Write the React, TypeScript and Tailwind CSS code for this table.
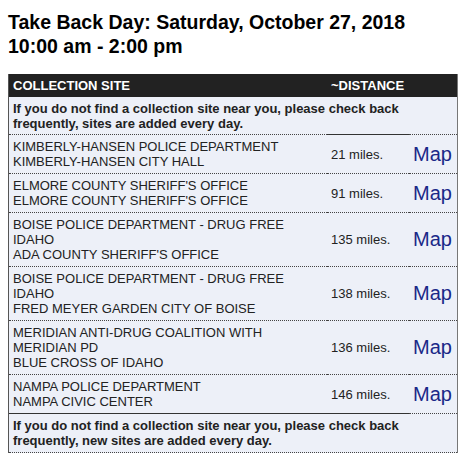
const sites = [
  { lines: ['KIMBERLY-HANSEN POLICE DEPARTMENT', 'KIMBERLY-HANSEN CITY HALL'], miles: 21 },
  { lines: ['ELMORE COUNTY SHERIFF\'S OFFICE', 'ELMORE COUNTY SHERIFF\'S OFFICE'], miles: 91 },
  { lines: ['BOISE POLICE DEPARTMENT - DRUG FREE', 'IDAHO', 'ADA COUNTY SHERIFF\'S OFFICE'], miles: 135 },
  { lines: ['BOISE POLICE DEPARTMENT - DRUG FREE', 'IDAHO', 'FRED MEYER GARDEN CITY OF BOISE'], miles: 138 },
  { lines: ['MERIDIAN ANTI-DRUG COALITION WITH', 'MERIDIAN PD', 'BLUE CROSS OF IDAHO'], miles: 136 },
  { lines: ['NAMPA POLICE DEPARTMENT', 'NAMPA CIVIC CENTER'], miles: 146 },
];

export default function App() {
  return (
    <div className="min-h-screen bg-white px-2 pt-[10px] text-[#222]" style={{ fontFamily: '"Liberation Sans", Arial, sans-serif' }}>
      <h1 className="text-[19.5px] font-bold leading-[24px] text-black">
        Take Back Day: Saturday, October 27, 2018
        <br />
        10:00 am - 2:00 pm
      </h1>

      <div className="mt-4 w-[450px] border-l border-r border-l-[#555] border-r-[#777] border-r-dotted bg-[#edf0f8] text-[13px] leading-[15px]">
        {/* header */}
        <div className="flex bg-[#222] font-bold text-white">
          <div className="w-[318px] px-1 py-1">COLLECTION SITE</div>
          <div className="flex-1 px-1 py-1">~DISTANCE</div>
        </div>

        {/* top notice */}
        <div className="px-1 pt-1 pb-[3px] font-bold">
          If you do not find a collection site near you, please check back frequently, sites are added every day.
        </div>
        <div className="flex">
          <div className="w-[318px] border-t border-dotted border-[#444]" />
          <div className="w-[82px] border-t border-solid border-[#333]" />
          <div className="flex-1 border-t border-dotted border-[#444]" />
        </div>

        {/* sites */}
        {sites.map((s, i) => {
          const last = i === sites.length - 1;
          return (
            <div key={i} className="flex">
              <div className={`w-[318px] px-1 py-1 border-b ${last ? 'border-solid border-[#333]' : 'border-dotted border-[#444]'}`}>
                {s.lines.map((l, j) => (
                  <div key={j}>{l}</div>
                ))}
              </div>
              <div className={`flex w-[82px] items-center px-1 border-b ${last ? 'border-solid border-[#333]' : 'border-dotted border-[#444]'}`}>
                {s.miles} miles.
              </div>
              <div className="flex flex-1 items-center px-1 border-b border-dotted border-[#444]">
                <a href="#" className="text-[20px] leading-[23px] text-[#1a2888]">Map</a>
              </div>
            </div>
          );
        })}

        {/* bottom notice */}
        <div className="border-b border-dotted border-[#444] px-1 py-1 font-bold">
          If you do not find a collection site near you, please check back frequently, new sites are added every day.
        </div>
      </div>
    </div>
  );
}
